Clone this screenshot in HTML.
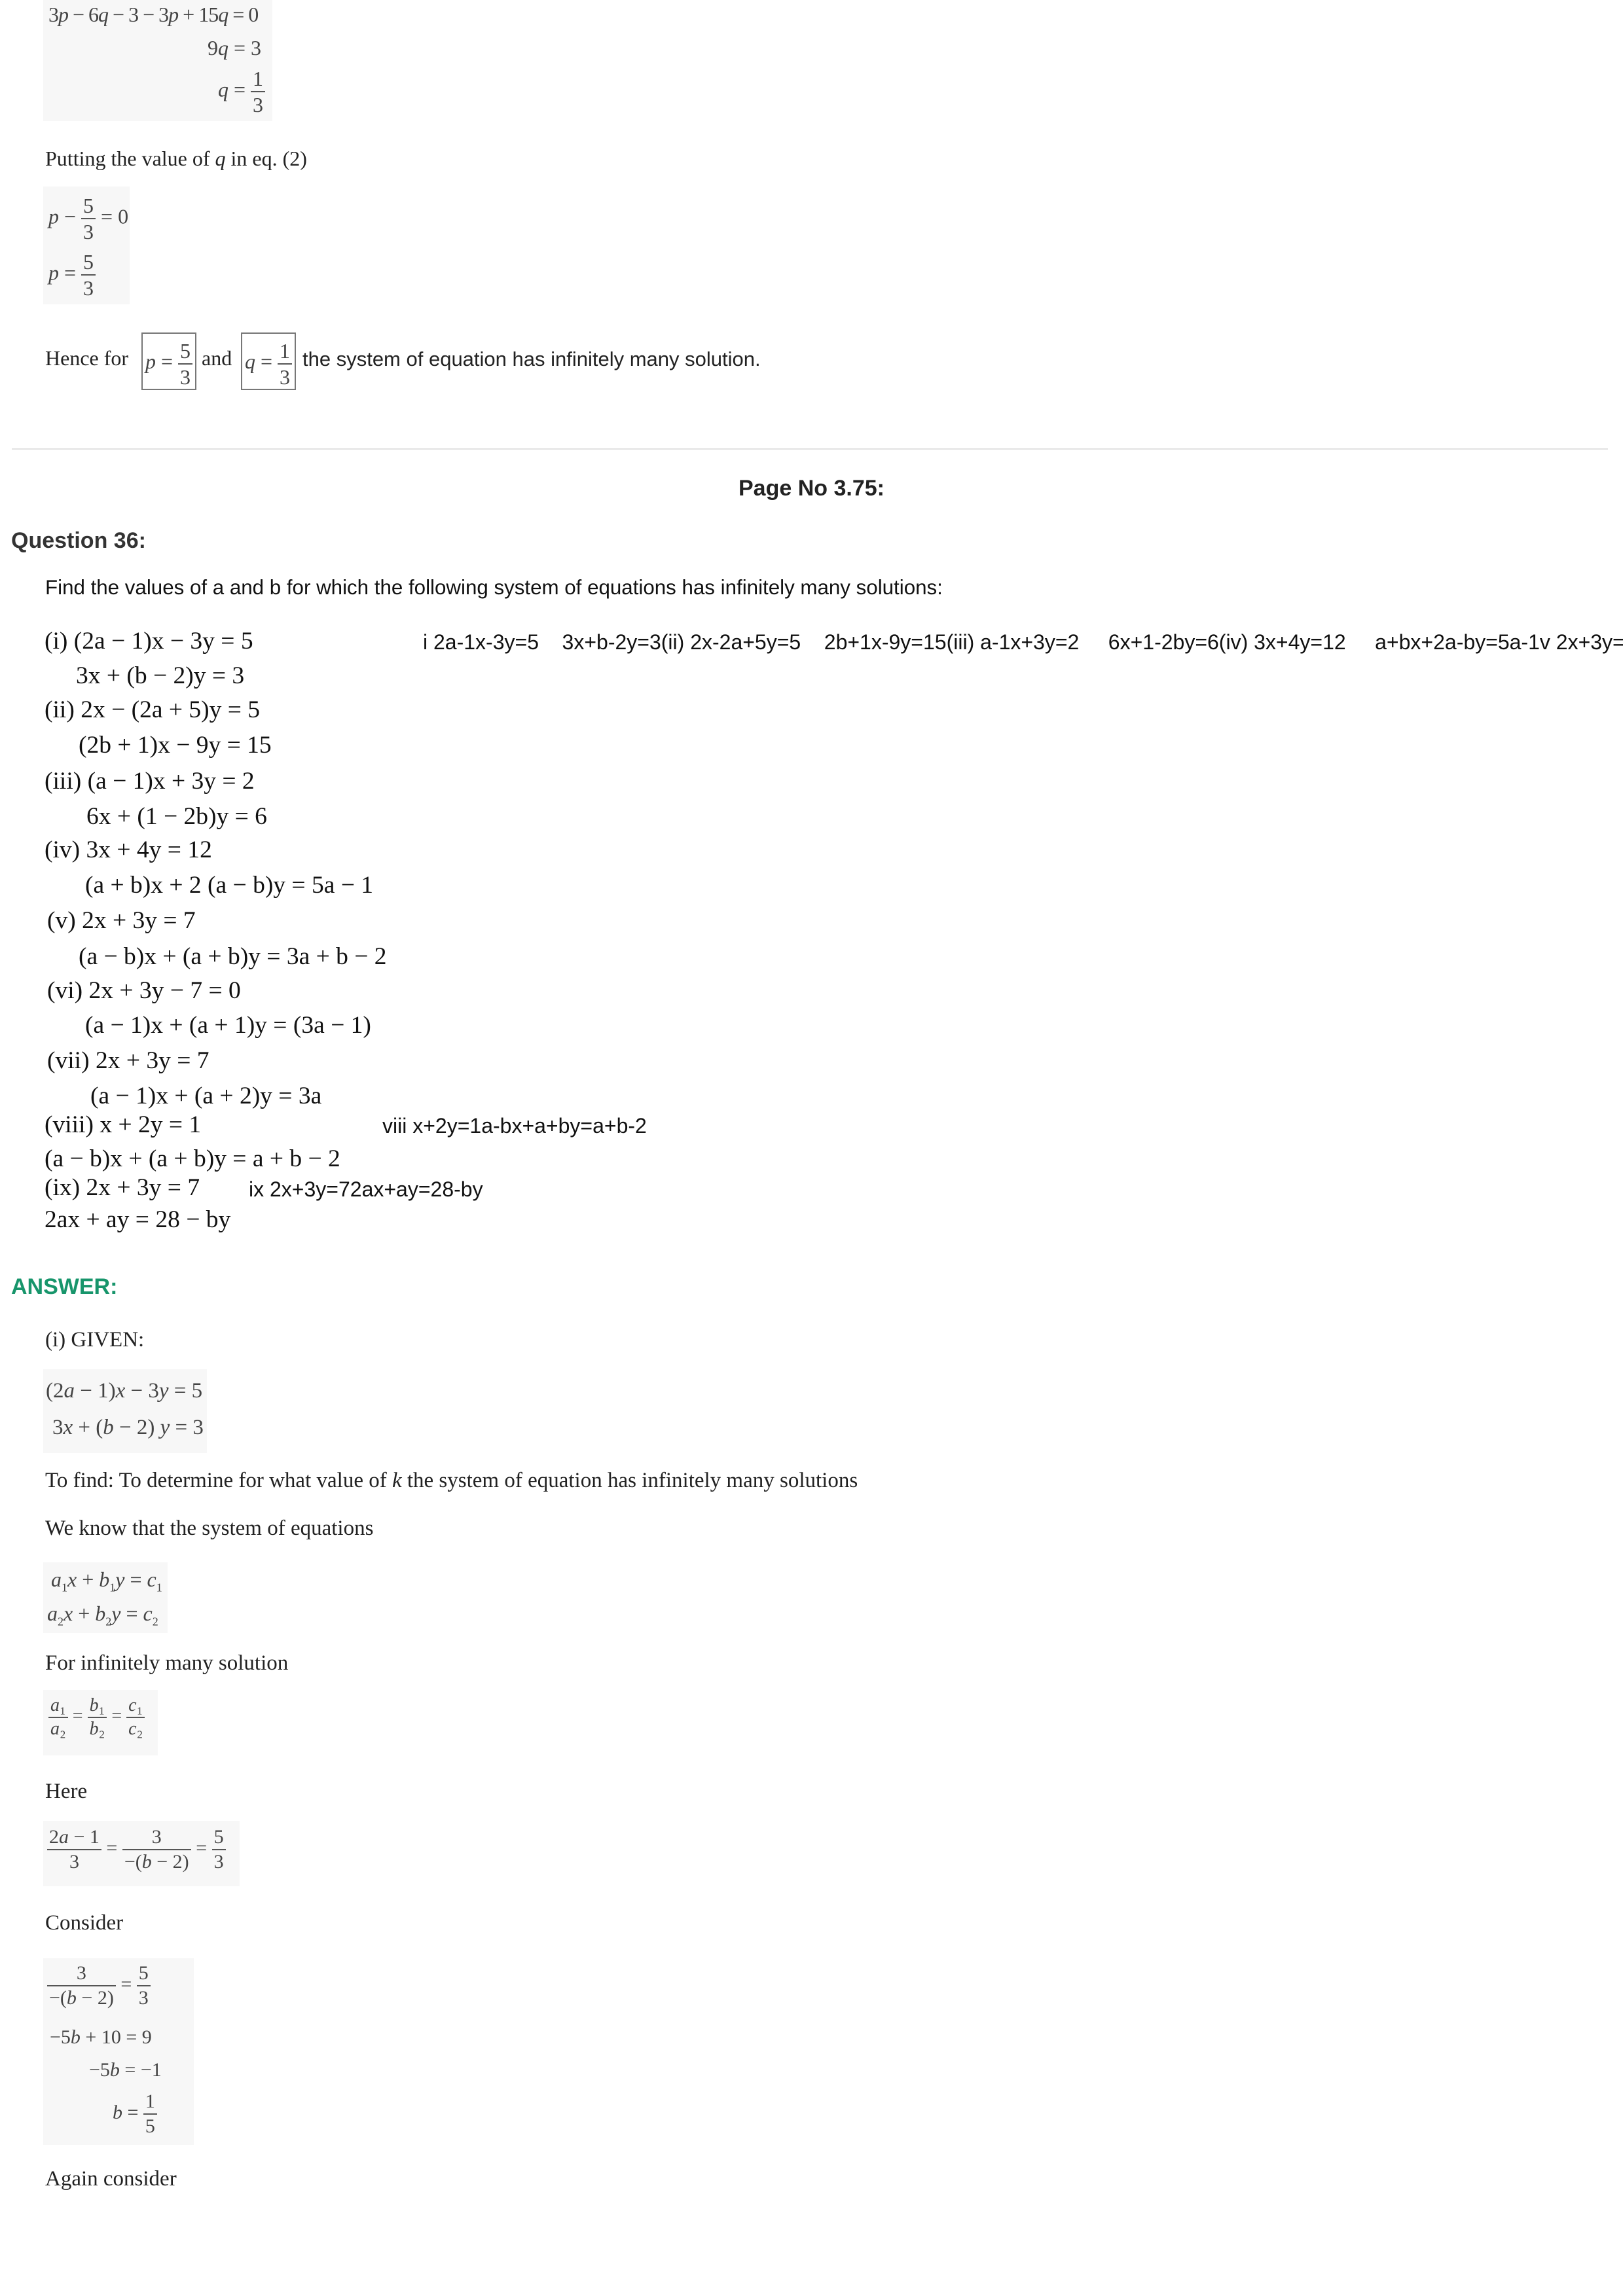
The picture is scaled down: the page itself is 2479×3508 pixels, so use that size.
<!DOCTYPE html>
<html><head><meta charset="utf-8"><style>
body{margin:0;width:2479px;height:3508px;background:#fff;position:relative;overflow:hidden;color:#222}
.a{position:absolute;white-space:nowrap}
.s{font-family:"Liberation Sans",sans-serif}
.r{font-family:"Liberation Serif",serif}
.m{font-family:"Liberation Serif",serif;color:#444;font-size:32px}
.i{font-style:italic}
.fr{display:inline-block;vertical-align:middle;text-align:center;line-height:1}
.fr span{display:block;padding:0 3px}
.fr span:first-child{border-bottom:2px solid #555;padding-bottom:3px}
.fr span:last-child{padding-top:3px}
.bg{position:absolute;background:#f7f7f7}
.eq{font-family:"Liberation Serif",serif;font-size:37.5px;color:#111}
.q{font-family:"Liberation Sans",sans-serif;font-size:32px;color:#111}
</style></head><body>

<div class="bg" style="left:66px;top:0;width:350px;height:185px"></div>
<div class="a m" style="left:74px;top:4px;letter-spacing:-1px">3<i>p</i> − 6<i>q</i> − 3 − 3<i>p</i> + 15<i>q</i> = 0</div>
<div class="a m" style="left:317px;top:55px">9<i>q</i> = 3</div>
<div class="a m" style="left:333px;top:104px"><i>q</i> = <span class="fr"><span>1</span><span>3</span></span></div>

<div class="a r" style="left:69px;top:224px;font-size:32px">Putting the value of <i>q</i> in eq. (2)</div>

<div class="bg" style="left:66px;top:285px;width:132px;height:180px"></div>
<div class="a m" style="left:74px;top:298px"><i>p</i> − <span class="fr"><span>5</span><span>3</span></span> = 0</div>
<div class="a m" style="left:74px;top:384px"><i>p</i> = <span class="fr"><span>5</span><span>3</span></span></div>

<div class="a r" style="left:69px;top:529px;font-size:32px">Hence for</div>
<div class="a m" style="left:216px;top:508px;border:2px solid #777;padding:0 4px;height:84px;line-height:84px"><i>p</i> = <span class="fr"><span>5</span><span>3</span></span></div>
<div class="a r" style="left:308px;top:529px;font-size:32px">and</div>
<div class="a m" style="left:368px;top:508px;border:2px solid #777;padding:0 4px;height:84px;line-height:84px"><i>q</i> = <span class="fr"><span>1</span><span>3</span></span></div>
<div class="a s" style="left:462px;top:531px;font-size:31px">the system of equation has infinitely many solution.</div>

<div class="a" style="left:18px;top:685px;width:2438px;height:2px;background:#e2e2e2"></div>

<div class="a s" style="left:1128px;top:727px;font-size:34px;font-weight:bold;color:#222">Page No 3.75:</div>
<div class="a s" style="left:17px;top:807px;font-size:34px;font-weight:bold;color:#333">Question 36:</div>
<div class="a s" style="left:69px;top:880px;font-size:31.3px;color:#111">Find the values of a and b for which the following system of equations has infinitely many solutions:</div>

<div class="a eq" style="left:68px;top:958px">(i)  (2a − 1)x − 3y = 5</div>
<div class="a q" style="left:646px;top:963px;white-space:pre">i 2a-1x-3y=5    3x+b-2y=3(ii) 2x-2a+5y=5    2b+1x-9y=15(iii) a-1x+3y=2     6x+1-2by=6(iv) 3x+4y=12     a+bx+2a-by=5a-1v 2x+3y=</div>
<div class="a eq" style="left:116px;top:1011px">3x + (b − 2)y = 3</div>
<div class="a eq" style="left:68px;top:1063px">(ii) 2x − (2a + 5)y = 5</div>
<div class="a eq" style="left:120px;top:1117px">(2b + 1)x − 9y = 15</div>
<div class="a eq" style="left:68px;top:1172px">(iii)  (a − 1)x + 3y = 2</div>
<div class="a eq" style="left:132px;top:1226px">6x + (1 − 2b)y = 6</div>
<div class="a eq" style="left:68px;top:1277px">(iv) 3x + 4y = 12</div>
<div class="a eq" style="left:130px;top:1331px">(a + b)x + 2 (a − b)y = 5a − 1</div>
<div class="a eq" style="left:72px;top:1385px">(v) 2x + 3y = 7</div>
<div class="a eq" style="left:120px;top:1440px">(a − b)x + (a + b)y = 3a + b − 2</div>
<div class="a eq" style="left:72px;top:1492px">(vi) 2x + 3y − 7 = 0</div>
<div class="a eq" style="left:130px;top:1545px">(a − 1)x + (a + 1)y = (3a − 1)</div>
<div class="a eq" style="left:72px;top:1599px">(vii) 2x + 3y = 7</div>
<div class="a eq" style="left:138px;top:1653px">(a − 1)x + (a + 2)y = 3a</div>
<div class="a eq" style="left:68px;top:1697px">(viii) x + 2y = 1</div>
<div class="a q" style="left:584px;top:1702px">viii x+2y=1a-bx+a+by=a+b-2</div>
<div class="a eq" style="left:68px;top:1749px">(a − b)x + (a + b)y = a + b − 2</div>
<div class="a eq" style="left:68px;top:1793px">(ix) 2x + 3y = 7</div>
<div class="a q" style="left:380px;top:1799px">ix 2x+3y=72ax+ay=28-by</div>
<div class="a eq" style="left:68px;top:1842px">2ax + ay = 28 − by</div>

<div class="a s" style="left:17px;top:1947px;font-size:34px;font-weight:bold;color:#17956b">ANSWER:</div>

<div class="a r" style="left:69px;top:2029px;font-size:33px">(i) GIVEN:</div>
<div class="bg" style="left:66px;top:2092px;width:250px;height:128px"></div>
<div class="a m" style="left:70px;top:2107px;font-size:33px">(2<i>a</i> − 1)<i>x</i> − 3<i>y</i> = 5</div>
<div class="a m" style="left:80px;top:2163px;font-size:33px">3<i>x</i> + (<i>b</i> − 2) <i>y</i> = 3</div>

<div class="a r" style="left:69px;top:2244px;font-size:33px">To find: To determine for what value of <i>k</i> the system of equation has infinitely many solutions</div>
<div class="a r" style="left:69px;top:2317px;font-size:33px">We know that the system of equations</div>

<div class="bg" style="left:66px;top:2387px;width:190px;height:108px"></div>
<div class="a m" style="left:78px;top:2395px"><i>a</i><sub style="font-size:18px">1</sub><i>x</i> + <i>b</i><sub style="font-size:18px">1</sub><i>y</i> = <i>c</i><sub style="font-size:18px">1</sub></div>
<div class="a m" style="left:72px;top:2447px"><i>a</i><sub style="font-size:18px">2</sub><i>x</i> + <i>b</i><sub style="font-size:18px">2</sub><i>y</i> = <i>c</i><sub style="font-size:18px">2</sub></div>

<div class="a r" style="left:69px;top:2523px;font-size:33px">For infinitely many solution</div>

<div class="bg" style="left:66px;top:2582px;width:175px;height:100px"></div>
<div class="a m" style="left:74px;top:2592px;font-size:28px"><span class="fr"><span><i>a</i>₁</span><span><i>a</i>₂</span></span> = <span class="fr"><span><i>b</i>₁</span><span><i>b</i>₂</span></span> = <span class="fr"><span><i>c</i>₁</span><span><i>c</i>₂</span></span></div>

<div class="a r" style="left:69px;top:2719px;font-size:33px">Here</div>

<div class="bg" style="left:66px;top:2782px;width:300px;height:100px"></div>
<div class="a m" style="left:72px;top:2792px;font-size:30px"><span class="fr"><span>2<i>a</i> − 1</span><span>3</span></span> = <span class="fr"><span>3</span><span>−(<i>b</i> − 2)</span></span> = <span class="fr"><span>5</span><span>3</span></span></div>

<div class="a r" style="left:69px;top:2920px;font-size:33px">Consider</div>

<div class="bg" style="left:66px;top:2992px;width:230px;height:285px"></div>
<div class="a m" style="left:72px;top:3000px;font-size:30px"><span class="fr"><span>3</span><span>−(<i>b</i> − 2)</span></span> = <span class="fr"><span>5</span><span>3</span></span></div>
<div class="a m" style="left:76px;top:3096px;font-size:30px">−5<i>b</i> + 10 = 9</div>
<div class="a m" style="left:136px;top:3146px;font-size:30px">−5<i>b</i> = −1</div>
<div class="a m" style="left:172px;top:3196px;font-size:30px"><i>b</i> = <span class="fr"><span>1</span><span>5</span></span></div>

<div class="a r" style="left:69px;top:3311px;font-size:33px">Again consider</div>
</body></html>
